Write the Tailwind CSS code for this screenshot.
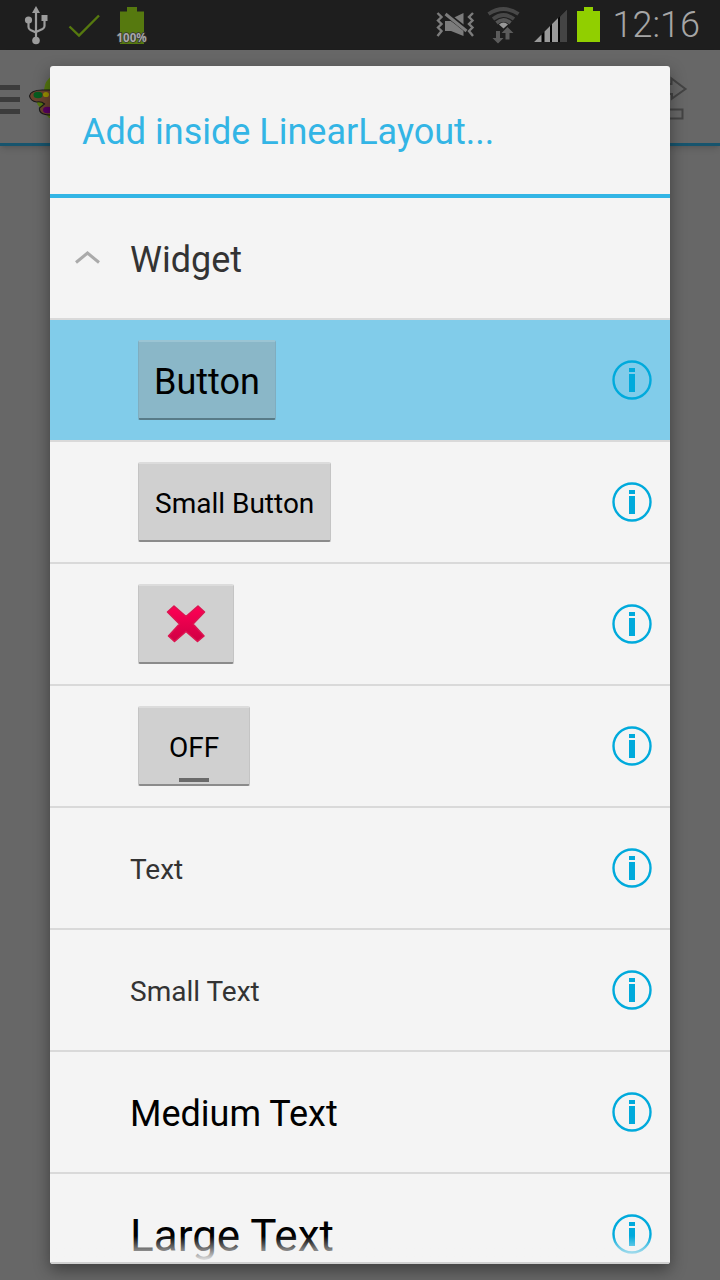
<!DOCTYPE html>
<html lang="en">
<head>
<meta charset="utf-8">
<meta name="viewport" content="width=device-width, initial-scale=1">
<title>Add inside LinearLayout</title>
<script src="https://cdn.jsdelivr.net/npm/@tailwindcss/browser@4"></script>
</head>
<body class="relative flex h-screen flex-col overflow-hidden bg-[#676767] font-['Roboto',sans-serif]">
<svg class="hidden" aria-hidden="true">
  <symbol id="info" viewBox="0 0 40 40">
    <circle cx="20" cy="20" r="18.5" fill="none" stroke="currentColor" stroke-width="2.4"/>
    <path d="M17 8h6v4h-6zM17 14h6v18h-6z" fill="currentColor"/>
  </symbol>
</svg>

<header class="flex h-[50px] shrink-0 items-center justify-between bg-[#1e1e1e] pr-5 pl-6">
  <svg class="h-[50px] w-[130px]" viewBox="24 0 130 50" aria-label="USB connected, battery full">
    <g fill="none" stroke="#9c9c9c" stroke-width="2.2">
      <path d="M36 10v30M28.500 21v6q0 2 2 3l5.500 2.500M44.500 18v8q0 2-2 3l-6.500 3"/>
    </g>
    <path d="M36 6l4 7h-8z M41.500 15h6v6h-6z" fill="#9c9c9c"/>
    <circle cx="28.500" cy="20" r="3.600" fill="#9c9c9c"/><circle cx="36" cy="40.500" r="3.800" fill="#9c9c9c"/>
    <path d="M69.500 26.500L79 35.500L99 15.500" fill="none" stroke="#56790f" stroke-width="2.4"/>
    <path d="M127 7h10v4.500h7V44h-24V11.500h7z" fill="#56790f"/>
    <text x="116.500" y="42" font-size="11.500" font-weight="700" fill="#a8a8a8" stroke="#333" stroke-width="1.500" paint-order="stroke" font-family="Noto Sans">100%</text>
  </svg>
  <div class="flex h-full items-center gap-[11px]">
    <svg class="h-[50px] w-[166px]" viewBox="436 0 166 50" aria-label="Vibrate, Wi-Fi, signal, battery">
      <path d="M437.500 13l4 4-3.500 3.500 3.500 3.500-3.500 3.500 3.500 3.500-4 5M473 13l-4 4 3.500 3.500-3.500 3.500 3.500 3.500-3.500 3.500 4 5" fill="none" stroke="#7c7c7c" stroke-width="2.400"/>
      <path d="M445 21h6l12.500 8.500V36L451 31h-6zM463.500 13v12L453 18z" fill="#7c7c7c"/>
      <path d="M444 12l23 18.500" stroke="#1e1e1e" stroke-width="5"/>
      <path d="M445.500 14l21 17" stroke="#7c7c7c" stroke-width="3"/>
      <g fill="none" stroke="#484848" stroke-width="3.800">
        <path d="M488.500 14q15-10 30 0M493 19q10.500-8 21 0"/>
        <path d="M496.500 23q7-6 14 0" stroke="#555"/>
      </g>
      <path d="M499 24.500q4.500-4 9 0l-4.500 4z" fill="#999"/>
      <path d="M496 31h4v7h3.500l-5.500 5.500-5.500-5.500h3.500zM505.500 39.500v-6.500h-4l6-6 6 6h-4v6.500z" fill="#5b5b5b"/>
      <path d="M534 42L567 9.500V42z" fill="#050505"/>
      <path d="M534 42l7.500-7.500V42zM544.500 31.500l5.500-5.500V42h-5.500zM552 24l6-6v24h-6z" fill="#999"/>
      <path d="M560 16.500l7-7V42h-7z" fill="#444"/>
      <path d="M584 7h9v4h7v31h-23V11h7z" fill="#91cf00"/>
    </svg>
    <time class="text-4xl font-light text-[#a6a6a6]">12:16</time>
  </div>
</header>

<div class="flex h-24 shrink-0 items-start justify-between border-b-3 border-[#17546d] bg-[#676767] shadow-md">
  <svg class="h-24 w-[72px]" viewBox="0 50 72 96" aria-hidden="true">
    <path d="M0 85h20v5H0zM0 97h20v5H0zM0 109h20v5H0z" fill="#3c3c3c"/>
    <path d="M44 90q1-10 8-14v42h-3l-10-12z" fill="#56790f"/>
    <path d="M37 102q4-1 6 2l-2 3q-4-1-4-5z" fill="#56790f"/>
    <path d="M29.500 96q1-6 13-6h12v25q-16 1-15-7l5-4q-3-3-8-2-6-1-7-6z" fill="#6a442e" stroke="#1a1a1a" stroke-width="1.200"/>
    <ellipse cx="38" cy="95" rx="4.500" ry="3.200" fill="#075c20"/>
    <ellipse cx="46" cy="94.500" rx="3" ry="2.600" fill="#9b9100"/>
    <ellipse cx="47.500" cy="110" rx="4.500" ry="3.200" fill="#580062"/>
  </svg>
  <svg class="h-24 w-20" viewBox="640 50 80 96" fill="none" stroke="#444" stroke-width="2" aria-hidden="true">
    <path d="M650 84h21.500v-5.500L685.500 89 672 98.500V94h-22zM650 109.500h32.500v9H650z"/>
  </svg>
</div>

<main role="dialog" aria-labelledby="title" class="absolute inset-x-[50px] top-[66px] bottom-4 flex flex-col overflow-hidden rounded-[3px] bg-[#f4f4f4] shadow-[0_6px_16px_rgba(0,0,0,0.4)]">
  <h1 id="title" class="flex h-33 shrink-0 items-center border-b-4 border-[#33b5e5] px-8 pt-1 text-4xl text-[#33b5e5]">Add inside LinearLayout...</h1>
  <ul class="text-black [&>li]:flex [&>li]:h-[122px] [&>li]:items-center [&>li]:border-b-2 [&>li]:border-[#d9d9d9] [&>li]:pr-[18px] [&>li]:pl-20">
    <li class="relative text-4xl text-[#333]">
      <svg class="absolute left-6 h-4 w-[26px]" viewBox="0 0 26 16" fill="none" stroke="#aaa" stroke-width="3" aria-hidden="true"><path d="M2 12.500L13.500 3 25 12.500"/></svg>
      <span class="pt-1">Widget</span>
    </li>
    <li class="justify-between bg-[#81ccea]">
      <button class="ml-2 h-20 rounded-xs border border-t-2 border-b-2 border-[#80adbf] border-t-[#9bc4d3] border-b-[#587b88] bg-[#8ab7c8] px-[15px] pt-1 text-4xl">Button</button>
      <button aria-label="About Button" class="text-[#00aadc]"><svg class="size-10"><use href="#info"/></svg></button>
    </li>
    <li class="justify-between">
      <button class="ml-2 h-20 rounded-xs border border-t-2 border-b-2 border-[#c4c4c4] border-t-[#dcdcdc] border-b-[#8b8b8b] bg-[#d0d0d0] px-4 pt-1 text-[28px]">Small Button</button>
      <button aria-label="About Small Button" class="text-[#00aadc]"><svg class="size-10"><use href="#info"/></svg></button>
    </li>
    <li class="justify-between">
      <button aria-label="Image button" class="ml-2 flex h-20 w-24 items-center justify-center rounded-xs border border-t-2 border-b-2 border-[#c4c4c4] border-t-[#dcdcdc] border-b-[#8b8b8b] bg-[#d0d0d0]">
        <svg class="size-10" viewBox="0 0 40 40"><defs><linearGradient id="red" x2="0" y2="1"><stop stop-color="#ff0055"/><stop offset="1" stop-color="#cf0044"/></linearGradient></defs><path d="M8 2L20 12.500 32 2 38.500 8 27 20 38 32 31.500 37.500 20 27.500 8.500 37.500 2.500 32 13.500 20 1.500 8z" fill="url(#red)" stroke="#dc1450" stroke-width="1.600" stroke-linejoin="round"/></svg>
      </button>
      <button aria-label="About image button" class="text-[#00aadc]"><svg class="size-10"><use href="#info"/></svg></button>
    </li>
    <li class="justify-between">
      <button aria-pressed="false" class="ml-2 flex h-20 w-28 flex-col items-center justify-end gap-[9px] rounded-xs border border-t-2 border-b-2 border-[#c4c4c4] border-t-[#dcdcdc] border-b-[#8b8b8b] bg-[#d0d0d0] pb-0.5 text-[28px]"><span>OFF</span><span class="h-1 w-[30px] bg-[#6a6a6a]"></span></button>
      <button aria-label="About toggle button" class="text-[#00aadc]"><svg class="size-10"><use href="#info"/></svg></button>
    </li>
    <li class="justify-between text-[28px] text-[#333]">
      <span class="pt-1">Text</span>
      <button aria-label="About Text" class="text-[#00aadc]"><svg class="size-10"><use href="#info"/></svg></button>
    </li>
    <li class="justify-between text-[28px] text-[#333]">
      <span class="pt-1">Small Text</span>
      <button aria-label="About Small Text" class="text-[#00aadc]"><svg class="size-10"><use href="#info"/></svg></button>
    </li>
    <li class="justify-between text-4xl">
      <span class="pt-1">Medium Text</span>
      <button aria-label="About Medium Text" class="text-[#00aadc]"><svg class="size-10"><use href="#info"/></svg></button>
    </li>
    <li class="justify-between text-[44px]">
      <span class="pt-1">Large Text</span>
      <button aria-label="About Large Text" class="text-[#00aadc]"><svg class="size-10"><use href="#info"/></svg></button>
    </li>
  </ul>
  <div class="pointer-events-none absolute inset-x-0 bottom-0 h-7 border-b-2 border-[#d0d0d0] bg-linear-to-t from-[#f4f4f4] to-[#f4f4f4]/0"></div>
</main>
</body>
</html>
